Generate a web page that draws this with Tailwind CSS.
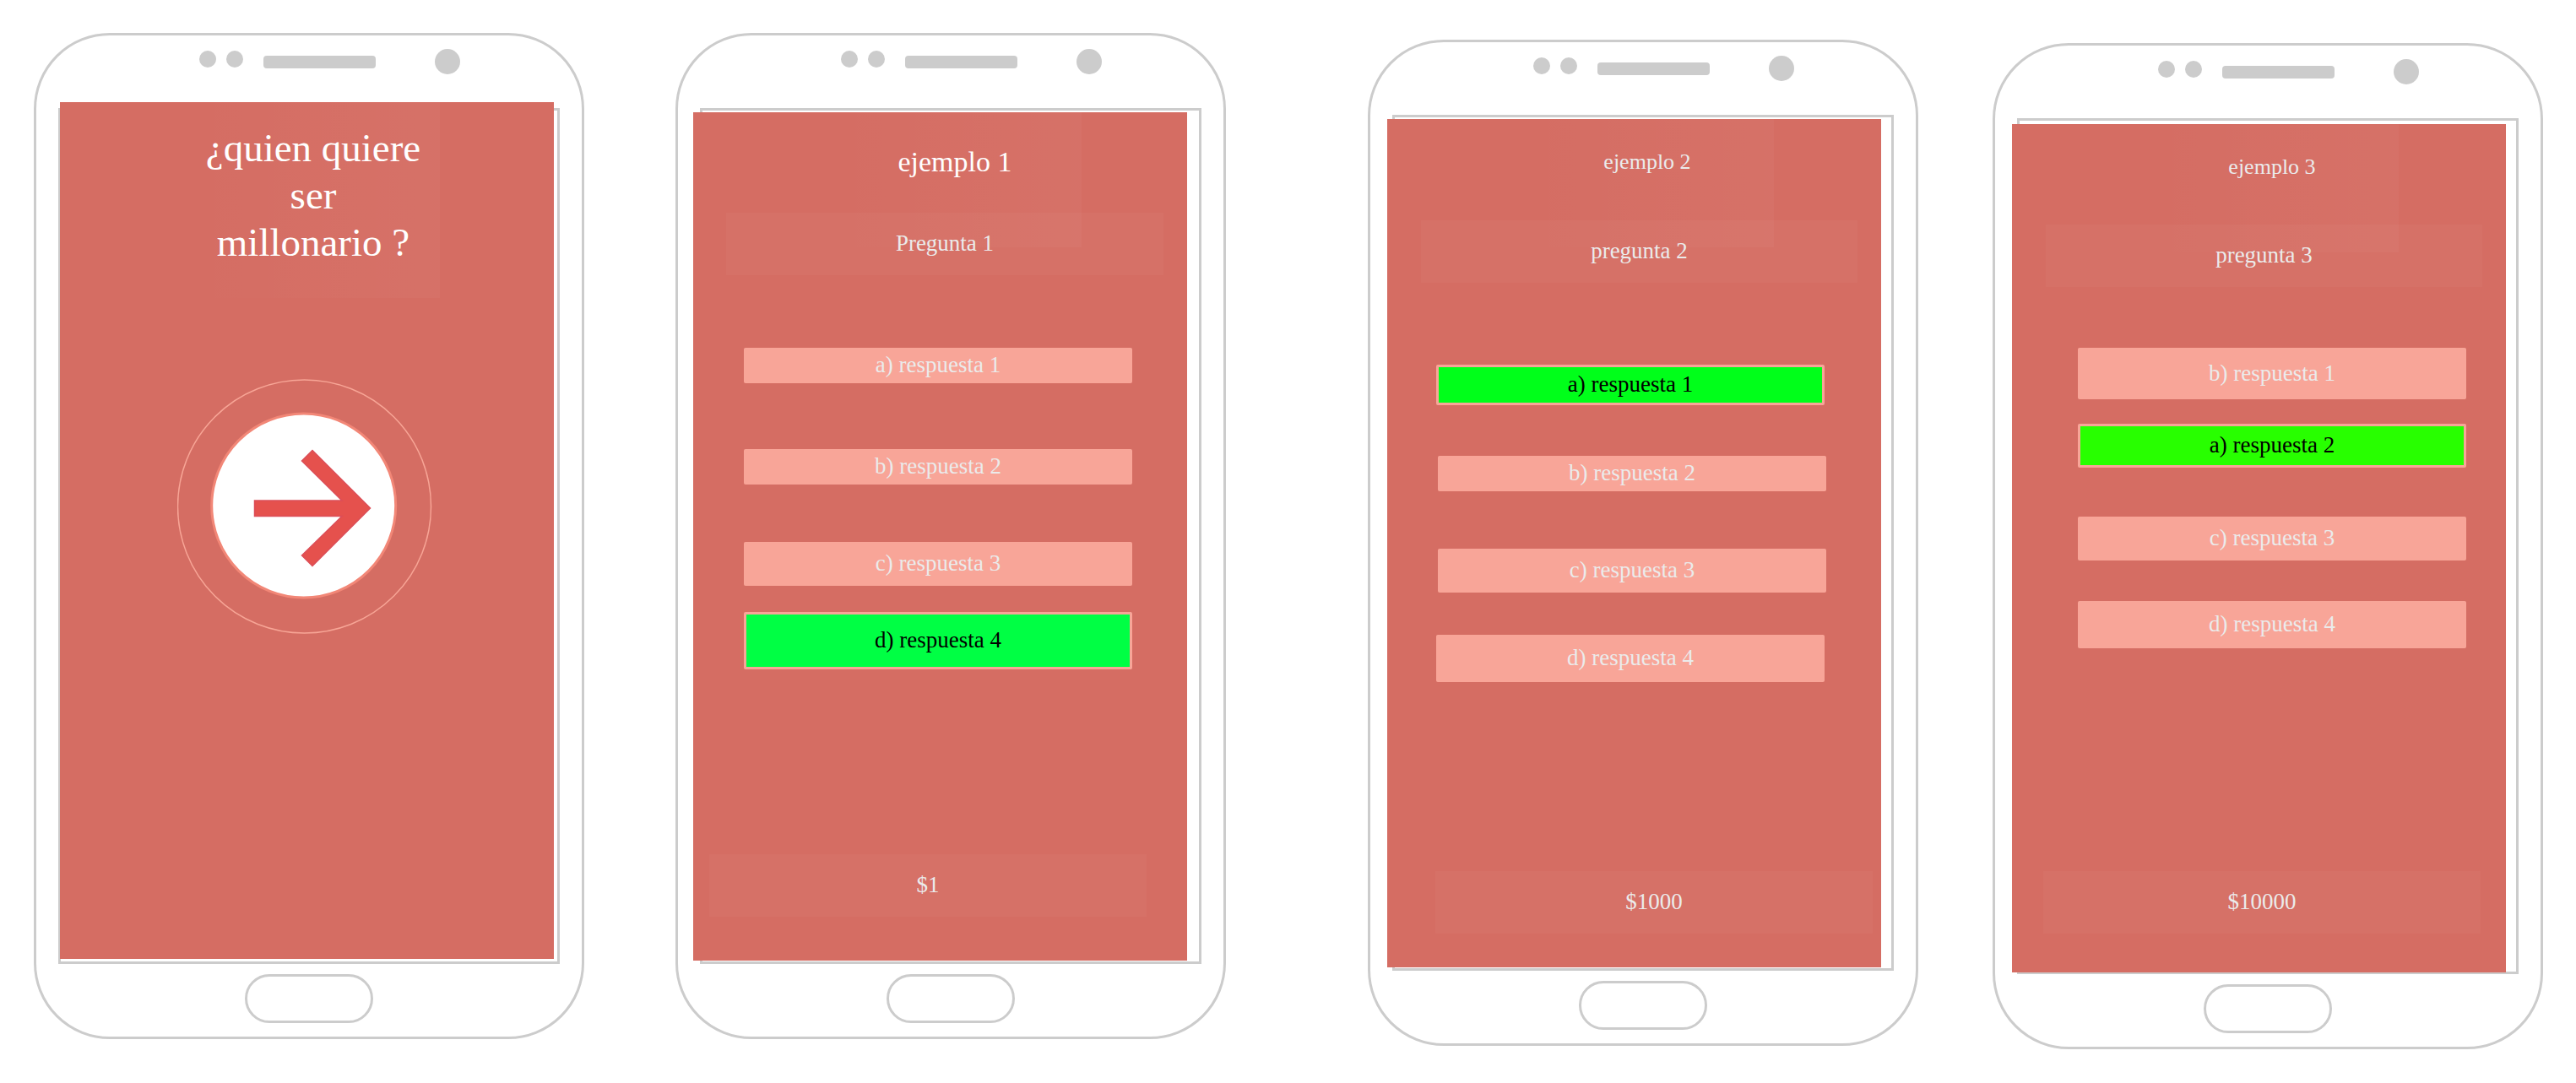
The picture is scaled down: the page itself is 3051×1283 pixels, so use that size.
<!DOCTYPE html>
<html lang="es">
<head>
<meta charset="utf-8">
<meta name="viewport" content="width=device-width, initial-scale=1">
<title>¿quien quiere ser millonario ?</title>
<script src="https://cdn.jsdelivr.net/npm/@tailwindcss/browser@4"></script>
</head>
<body class="bg-white font-['Liberation_Serif','Times_New_Roman',serif] text-[27px] leading-8 text-[#ebebeb]">
<main class="flex flex-wrap items-start pt-[39px] pr-[39px] pb-8 pl-10">

  <!-- Start screen -->
  <section class="flex min-w-[480px] flex-1 flex-col rounded-[90px] border-3 border-[#ccc]">
    <header class="flex h-[86px] items-start justify-center pt-4 pl-12">
      <div class="flex h-[30px] items-center">
        <span class="mr-3 mb-[6px] size-5 rounded-full bg-[#ccc]"></span>
        <span class="mr-6 mb-[6px] size-5 rounded-full bg-[#ccc]"></span>
        <span class="mr-[70px] h-[15px] w-[133px] rounded-sm bg-[#ccc]"></span>
        <span class="size-[30px] rounded-full bg-[#ccc]"></span>
      </div>
    </header>
    <div class="mx-[26px] flex h-[1014px] flex-col border-3 border-[#ccc]">
      <div class="-mt-[10px] mr-1 mb-[3px] -ml-px flex flex-1 flex-col bg-[#d56d63]">
        <h1 class="mr-[135px] ml-[150px] h-[232px] bg-linear-to-r from-white/0 to-white/3 pt-[26px] text-center text-[47px] leading-14 text-white">¿quien quiere<br>ser<br>millonario ?</h1>
        <button type="button" aria-label="Empezar" class="mt-24 mr-[5px] self-center">
          <svg class="block size-[302px]" viewBox="210 449 302 302" fill="none">
            <circle cx="360.5" cy="600" r="150" stroke="#f7a596" stroke-width="1.5"/>
            <circle cx="359.7" cy="599" r="109" fill="#fff" stroke="#f28777" stroke-width="3"/>
            <path d="M301.500 593H405L357.500 546L370 533.500L438.500 602L370 670.500L357.500 658L405 611.500H301.500Z" fill="#e5514d" stroke="#dc4e58" stroke-width="1.500"/>
          </svg>
        </button>
      </div>
    </div>
    <footer class="flex h-[86px] justify-center pt-3">
      <button type="button" aria-label="Inicio" class="h-[58px] w-[152px] rounded-full border-3 border-[#ccc]"></button>
    </footer>
  </section>

  <!-- Question 1 -->
  <section class="ml-[108px] flex min-w-[480px] flex-1 flex-col rounded-[90px] border-3 border-[#ccc]">
    <header class="flex h-[86px] items-start justify-center pt-4 pl-12">
      <div class="flex h-[30px] items-center">
        <span class="mr-3 mb-[6px] size-5 rounded-full bg-[#ccc]"></span>
        <span class="mr-6 mb-[6px] size-5 rounded-full bg-[#ccc]"></span>
        <span class="mr-[70px] h-[15px] w-[133px] rounded-sm bg-[#ccc]"></span>
        <span class="size-[30px] rounded-full bg-[#ccc]"></span>
      </div>
    </header>
    <div class="mx-[26px] flex h-[1014px] flex-col border-3 border-[#ccc]">
      <div class="mt-[2px] mr-[14px] mb-px -ml-[11px] flex flex-1 flex-col bg-[#d56d63]">
        <h2 class="mr-[125px] ml-[160px] flex h-40 items-center justify-center bg-linear-to-r from-white/0 to-white/3 pb-[43px] text-[34px] text-white">ejemplo 1</h2>
        <p class="-mt-[41px] mr-7 ml-[39px] flex h-[74px] items-center justify-center bg-white/3 pb-[2px]">Pregunta 1</p>
        <div class="mt-[86px] mr-[65px] ml-[60px] flex flex-col">
          <button type="button" class="h-[42px] rounded-xs bg-[#f8a598] pb-[2px]">a) respuesta 1</button>
          <button type="button" class="mt-[78px] h-[42px] rounded-xs bg-[#f8a598] pb-[2px]">b) respuesta 2</button>
          <button type="button" class="mt-[68px] h-[52px] rounded-xs bg-[#f8a598] pb-[2px]">c) respuesta 3</button>
          <button type="button" class="mt-[31px] h-[68px] rounded-xs border-3 border-[#f8a598] bg-[#00ff44] pb-[2px] text-black">d) respuesta 4</button>
        </div>
        <p class="mt-[219px] mr-12 ml-[19px] flex h-[74px] items-center justify-center bg-white/3 pb-[2px]">$1</p>
      </div>
    </div>
    <footer class="flex h-[86px] justify-center pt-3">
      <button type="button" aria-label="Inicio" class="h-[58px] w-[152px] rounded-full border-3 border-[#ccc]"></button>
    </footer>
  </section>

  <!-- Question 2 -->
  <section class="mt-2 ml-[168px] flex min-w-[480px] flex-1 flex-col rounded-[90px] border-3 border-[#ccc]">
    <header class="flex h-[86px] items-start justify-center pt-4 pl-12">
      <div class="flex h-[30px] items-center">
        <span class="mr-3 mb-[6px] size-5 rounded-full bg-[#ccc]"></span>
        <span class="mr-6 mb-[6px] size-5 rounded-full bg-[#ccc]"></span>
        <span class="mr-[70px] h-[15px] w-[133px] rounded-sm bg-[#ccc]"></span>
        <span class="size-[30px] rounded-full bg-[#ccc]"></span>
      </div>
    </header>
    <div class="mx-[26px] flex h-[1014px] flex-col border-3 border-[#ccc]">
      <div class="mt-[2px] mr-3 mb-px -ml-[9px] flex flex-1 flex-col bg-[#d56d63]">
        <h2 class="mr-[127px] ml-[158px] flex h-[152px] items-center justify-center bg-linear-to-r from-white/0 to-white/3 pb-[50px] text-[26px]">ejemplo 2</h2>
        <p class="-mt-8 mr-7 ml-10 flex h-[74px] items-center justify-center bg-white/3 pb-[2px]">pregunta 2</p>
        <div class="mt-[97px] mr-[65px] ml-[58px] flex flex-col">
          <button type="button" class="mr-[2px] h-12 rounded-xs border-3 border-[#f8a598] bg-[#00ff1a] pb-[2px] text-black">a) respuesta 1</button>
          <button type="button" class="mt-[60px] ml-[2px] h-[42px] rounded-xs bg-[#f8a598] pb-[2px]">b) respuesta 2</button>
          <button type="button" class="mt-[68px] ml-[2px] h-[52px] rounded-xs bg-[#f8a598] pb-[2px]">c) respuesta 3</button>
          <button type="button" class="mt-[50px] mr-[2px] h-14 rounded-xs bg-[#f8a598] pb-[2px]">d) respuesta 4</button>
        </div>
        <p class="mt-[224px] mr-[10px] ml-[57px] flex h-[74px] items-center justify-center bg-white/3 pb-[2px]">$1000</p>
      </div>
    </div>
    <footer class="flex h-[86px] justify-center pt-3">
      <button type="button" aria-label="Inicio" class="h-[58px] w-[152px] rounded-full border-3 border-[#ccc]"></button>
    </footer>
  </section>

  <!-- Question 3 -->
  <section class="mt-3 ml-[88px] flex min-w-[480px] flex-1 flex-col rounded-[90px] border-3 border-[#ccc]">
    <header class="flex h-[86px] items-start justify-center pt-4 pl-12">
      <div class="flex h-[30px] items-center">
        <span class="mr-3 mb-[6px] size-5 rounded-full bg-[#ccc]"></span>
        <span class="mr-6 mb-[6px] size-5 rounded-full bg-[#ccc]"></span>
        <span class="mr-[70px] h-[15px] w-[133px] rounded-sm bg-[#ccc]"></span>
        <span class="size-[30px] rounded-full bg-[#ccc]"></span>
      </div>
    </header>
    <div class="mx-[26px] flex h-[1014px] flex-col border-3 border-[#ccc]">
      <div class="mt-1 mr-3 -mb-px -ml-[9px] flex flex-1 flex-col bg-[#d56d63]">
        <h2 class="mr-[127px] ml-[158px] flex h-[152px] items-center justify-center bg-linear-to-r from-white/0 to-white/3 pb-[50px] text-[26px]">ejemplo 3</h2>
        <p class="-mt-[33px] mr-7 ml-10 flex h-[74px] items-center justify-center bg-white/3 pb-[2px]">pregunta 3</p>
        <div class="mt-[72px] mr-[47px] ml-[78px] flex flex-col">
          <button type="button" class="h-[61px] rounded-xs bg-[#f8a598] pb-[2px]">b) respuesta 1</button>
          <button type="button" class="mt-[29px] h-[52px] rounded-xs border-3 border-[#f8a598] bg-[#28ff00] pb-[2px] text-black">a) respuesta 2</button>
          <button type="button" class="mt-[58px] h-[52px] rounded-xs bg-[#f8a598] pb-[2px]">c) respuesta 3</button>
          <button type="button" class="mt-12 h-14 rounded-xs bg-[#f8a598] pb-[2px]">d) respuesta 4</button>
        </div>
        <p class="mt-[264px] mr-[30px] ml-[37px] flex h-[74px] items-center justify-center bg-white/3 pb-[2px]">$10000</p>
      </div>
    </div>
    <footer class="flex h-[86px] justify-center pt-3">
      <button type="button" aria-label="Inicio" class="h-[58px] w-[152px] rounded-full border-3 border-[#ccc]"></button>
    </footer>
  </section>

</main>
</body>
</html>
